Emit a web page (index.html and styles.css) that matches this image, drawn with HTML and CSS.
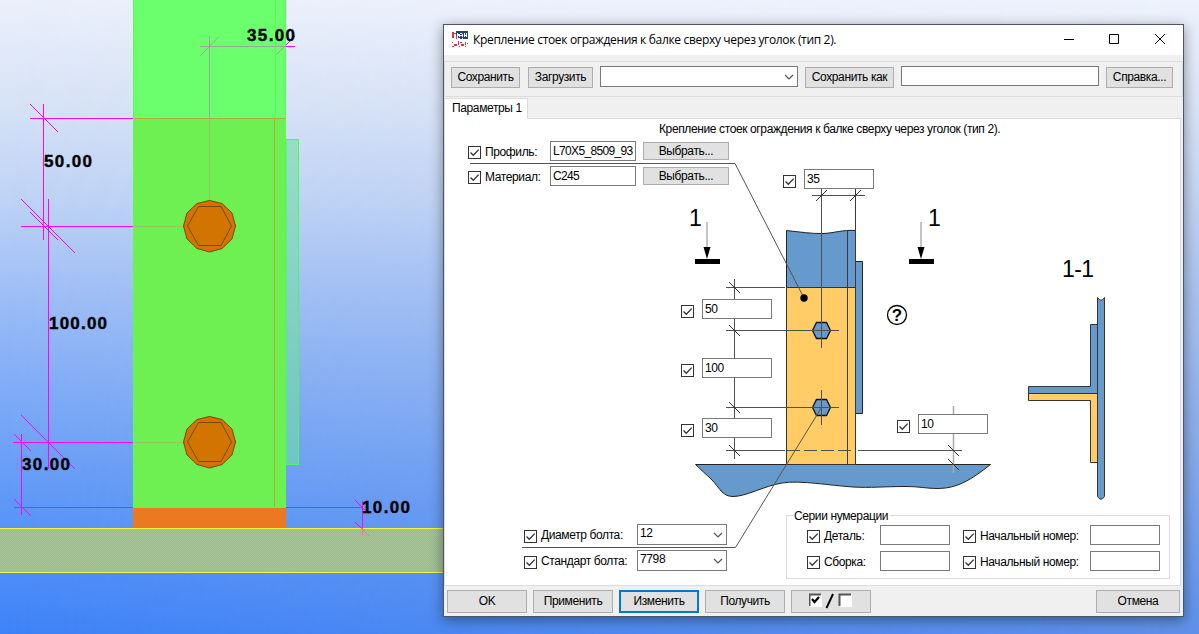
FILE: index.html
```html
<!DOCTYPE html>
<html lang="ru">
<head>
<meta charset="utf-8">
<title>Крепление стоек ограждения</title>
<link rel="stylesheet" href="styles.css">
</head>
<body>
<svg class="symbols" width="0" height="0">
  <symbol id="tick" viewBox="0 0 13 13"><path d="M2.5 6.5 5.3 9.3 10.7 3.6" fill="none" stroke="#333" stroke-width="1.3"/></symbol>
  <symbol id="chev" viewBox="0 0 10 6"><path d="M1 1 5 5 9 1" fill="none" stroke="#555" stroke-width="1.2"/></symbol>
</svg>
<main class="desktop">
  <svg class="model" viewBox="0 0 1199 634">
    <defs>
      <pattern id="dots" width="2" height="2" patternUnits="userSpaceOnUse"><path d="M0 0h1v1H0zM1 1h1v1H1z" fill="#c0d070" opacity=".4"/></pattern>
    </defs>
    <rect x="133" y="0" width="153" height="118" fill="#6bff6e"/>
    <rect x="133" y="118" width="153" height="390" fill="#6ef053"/>
    <path d="M133.5 0V507M285.500 0V507M275.500 0V118" stroke="#55fd58" fill="none"/>
    <rect x="133" y="508" width="153" height="20" fill="#eb7921"/>
    <path d="M274.500 508V528" stroke="#fb760c"/>
    <path d="M134 118.500H285M274.500 119V507" stroke="#b5aa38" fill="none"/>
    <rect x="286" y="139.500" width="12.500" height="325" fill="#6fe0a4" fill-opacity=".6" stroke="#4bf85c"/>
    <rect x="0" y="528" width="443" height="45" fill="#9abb9c"/>
    <rect x="0" y="528" width="443" height="45" fill="url(#dots)"/>
    <path d="M0 528.500H443M0 572.500H443" stroke="#f6f63c"/>
    <g stroke="#98aa90" fill="none">
      <path d="M200 46.500H286M209.500 36V118M200.500 55.500 219 36.500M276 55 286 45"/>
      <path d="M209.500 118V200M134 226.500H184M134 442.500H184" stroke="#98c460"/>
    </g>
    <g stroke="#fa04fa" fill="none">
      <path d="M286 46.500H295M286 45 295 36"/>
      <path d="M30 118.500H133M43.500 104V240M30 104 58 132M30 212 58 240"/>
      <path d="M21 226.500H133M48.500 199V469M21 199 75 253M21 415 75 469"/>
      <path d="M13 442.500H133M21.500 434V515M14 434 31 451"/>
      <path d="M14 507.500H133M14 499 31 516"/>
      <path d="M286 507.500H362"/>
      <path d="M362.500 501V528M355 500 369 514M355 522 361 528"/>
      <path d="M362.500 528V535M361 528 369 536" stroke="#f86c90"/>
    </g>
    <g fill="#d27400" stroke="#7b4504">
      <path id="bolt" d="M209.500 200.500 222 203.500 232 213 235.500 226 232 239 222 248.500 209.500 252 197 248.500 187 239 183.500 226 187 213 197 203.500ZM198.500 206.500H221L231.500 226 221 245.500H198.500L187.500 226Z"/>
      <use href="#bolt" y="216"/>
    </g>
    <g class="dim-text">
      <text x="247" y="41" textLength="48">35.00</text>
      <text x="44" y="167" textLength="48">50.00</text>
      <text x="49" y="329" textLength="58">100.00</text>
      <text x="22" y="470" textLength="48">30.00</text>
      <text x="362" y="513" textLength="48">10.00</text>
    </g>
  </svg>

  <section class="window">
    <header class="titlebar">
      <svg class="app-icon" viewBox="0 0 16 16" shape-rendering="crispEdges">
        <path d="M4 0h12v8H6V6H4z" fill="#1f4382"/>
        <path d="M0 1h2v1h2v1H2v4H0zM4 4h1v4H4zM0 11h1v1H0zM2 13h3v2H2zM6 10h1v4H6zM8 11h2v1H8zM9 13h3v2H9zM13 11h1v3h-1zM15 12h1v1h-1zM0 15h2v1H0zM7 15h1v1H7zM13 15h1v1h-1z" fill="#e0313f"/>
        <path d="M5 2h1v1h1v2H6v2H5zM8 2h2v1H8zM8 4h2v1H8zM7 3h1v3H7zM10 3h1v3h-1zM12 2h1v4h-1zM13 4h1v1h-1zM14 2h1v4h-1zM6 7h2v1H6zM10 7h1v1h-1z" fill="#fff"/>
      </svg>
      <h1>Крепление стоек ограждения к балке сверху через уголок (тип 2).</h1>
      <svg class="win-controls" viewBox="0 0 110 20" fill="none" stroke="#000">
        <path d="M2 9.500H12M47.500 4.500h9v9h-9zM93 4 103 14M103 4 93 14"/>
      </svg>
    </header>

    <div class="toolbar">
      <button class="btn save">Сохранить</button>
      <button class="btn load">Загрузить</button>
      <div class="combo preset"><svg><use href="#chev"/></svg></div>
      <button class="btn save-as">Сохранить как</button>
      <div class="input name"></div>
      <button class="btn help">Справка...</button>
    </div>

    <nav class="tabs"><span class="tab">Параметры 1</span></nav>

    <div class="panel">
      <svg class="drawing" viewBox="444 118 738 468">
        <g fill="#6699cc" stroke="#222">
          <path d="M786.500 230.500C800 232 812 233.800 823 233.500S843 229.500 855.500 230.500V287.500H786.500Z"/>
          <path d="M855.500 261.500H862.500V413.500H855.500Z"/>
          <path d="M695.500 464.500H990.500C971 480 957 488.500 938 488.500C926 488.500 920 486.500 905 486.500C885 486.500 870 488 853 487C830 485.500 800 480 782 483C764 486 746 496.500 733 496.500C722 496.500 720 488 711 479C706 474 701 470 695.500 464.500Z"/>
        </g>
        <path d="M786.500 287.500H855.500V464.500H786.500Z" fill="#ffcc66" stroke="#333"/>
        <path d="M847.500 230V464M855.500 189V464" stroke="#3a3a3a"/>
        <g fill="#6699cc" stroke="#111" stroke-width="1.300">
          <path d="M812.500 330.500 816.500 322.500H826.500L830.500 330.500 826.500 338.500H816.500Z"/>
          <path d="M812.500 407.500 816.500 399.500H826.500L830.500 407.500 826.500 415.500H816.500Z"/>
        </g>
        <g stroke="#505050" fill="none">
          <path d="M821.500 189V348M821.500 390V425M812 195.500H865"/>
          <path d="M734.500 279V459M726 287.500H785M726 330.500H839M726 407.500H839M726 450.500H785M858 450.500H962"/>
          <path d="M787 450.500H855" stroke-dasharray="13 4"/>
        </g>
        <path d="M953.500 406V473" stroke="#aaa" stroke-width="1.500"/>
        <path d="M816 201 827 190M850 201 861 190M729 282 740 293M729 325 740 336M729 402 740 413M729 445 740 456M948 445 959 456M948 459 959 470" stroke="#333"/>
        <path d="M470 163.500H735L804 298M522 547.500H735.500L821.500 407.500" fill="none" stroke="#555"/>
        <circle cx="804" cy="298" r="3.700"/>
        <path d="M707 222V248M921 222V248" stroke="#888"/>
        <path d="M703.500 247H710.500L707 259ZM695 259H720V264H695ZM917.500 247H924.500L921 259ZM909 259H934V264H909Z"/>
        <circle cx="897" cy="315" r="9.500" fill="#fff" stroke="#000" stroke-width="1.300"/>
        <g fill="#6699cc" stroke="#333">
          <path d="M1028.500 386.500H1090.500V324.500H1097.500V393.500H1028.500Z"/>
          <path d="M1028.500 393.500H1097.500V462.500H1090.500V400.500H1028.500Z" fill="#ffcc66"/>
          <path d="M1097.500 297.500Q1101 303 1104.500 297.500V496.500Q1101 502 1097.500 496.500Z"/>
        </g>
        <g class="marks">
          <text x="689" y="226">1</text>
          <text x="928" y="226">1</text>
          <text x="1062" y="277" textLength="32">1-1</text>
          <text class="q" x="897" y="321">?</text>
        </g>
      </svg>

      <p class="caption">Крепление стоек ограждения к балке сверху через уголок (тип 2).</p>

      <div class="rows profile">
        <div class="row"><span class="cb"><svg><use href="#tick"/></svg></span><label>Профиль:</label><div class="input">L70X5_8509_93</div><button class="btn">Выбрать...</button></div>
        <div class="row"><span class="cb"><svg><use href="#tick"/></svg></span><label>Материал:</label><div class="input">C245</div><button class="btn">Выбрать...</button></div>
      </div>

      <div class="pin edge-x"><span class="cb"><svg><use href="#tick"/></svg></span><div class="input">35</div></div>
      <div class="pin top-y"><span class="cb"><svg><use href="#tick"/></svg></span><div class="input">50</div></div>
      <div class="pin pitch"><span class="cb"><svg><use href="#tick"/></svg></span><div class="input">100</div></div>
      <div class="pin bottom-y"><span class="cb"><svg><use href="#tick"/></svg></span><div class="input">30</div></div>
      <div class="pin gap-y"><span class="cb"><svg><use href="#tick"/></svg></span><div class="input">10</div></div>

      <div class="lower">
        <div class="rows bolts">
          <div class="row"><span class="cb"><svg><use href="#tick"/></svg></span><label>Диаметр болта:</label><div class="combo">12<svg><use href="#chev"/></svg></div></div>
          <div class="row"><span class="cb"><svg><use href="#tick"/></svg></span><label>Стандарт болта:</label><div class="combo">7798<svg><use href="#chev"/></svg></div></div>
        </div>
        <div class="series">
          <span class="legend">Серии нумерации</span>
          <div class="row"><span class="cb"><svg><use href="#tick"/></svg></span><label class="part">Деталь:</label><div class="input"></div><span class="cb second"><svg><use href="#tick"/></svg></span><label class="num">Начальный номер:</label><div class="input"></div></div>
          <div class="row"><span class="cb"><svg><use href="#tick"/></svg></span><label class="part">Сборка:</label><div class="input"></div><span class="cb second"><svg><use href="#tick"/></svg></span><label class="num">Начальный номер:</label><div class="input"></div></div>
        </div>
      </div>
    </div>

    <footer class="actions">
      <button class="btn">OK</button>
      <button class="btn">Применить</button>
      <button class="btn primary">Изменить</button>
      <button class="btn">Получить</button>
      <button class="btn">
        <svg class="toggle" viewBox="0 0 44 16">
          <path d="M0 1H12V13H0Z" fill="#fff"/><path d="M.5 13V1.500H12" fill="none" stroke="#555" stroke-width="2"/><path d="M12.500 2V13.500H1" fill="none" stroke="#fff"/>
          <path d="M3 6 5.500 9 10 4" fill="none" stroke="#000" stroke-width="2.200"/>
          <path d="M17.500 15 24 1" stroke="#000" stroke-width="1.900"/>
          <path d="M30 1H42V13H30Z" fill="#fff"/><path d="M30.500 13V1.500H42" fill="none" stroke="#555" stroke-width="2"/><path d="M42.500 2V13.500H31" fill="none" stroke="#fff"/>
        </svg>
      </button>
      <button class="btn cancel">Отмена</button>
    </footer>
  </section>
</main>
</body>
</html>
```
FILE: styles.css
```css
* { box-sizing: border-box; }
body { margin: 0; font-family: "Liberation Sans", Arial, sans-serif; font-size: 12px; letter-spacing: -.38px; color: #000; overflow: hidden; }
.symbols { position: absolute; }

.desktop {
  position: relative;
  width: 1199px;
  height: 634px;
  overflow: hidden;
  background: linear-gradient(180deg, #ebf0fb 0, #d8e3f6 16%, #bdd2f5 32%, #9dbdf6 47%, #7daaf6 63%, #5f98f7 79%, #3f83f8 100%);
}
.desktop::before {
  content: "";
  position: absolute;
  inset: 0;
  background: linear-gradient(180deg, #edf2fc 0, #d5e0f5 19%, #a8c0ec 47%, #88aae8 71%, #5e90e8 100%);
  -webkit-mask-image: linear-gradient(90deg, transparent, #000);
  mask-image: linear-gradient(90deg, transparent, #000);
}
.model { position: absolute; inset: 0; width: 1199px; height: 634px; }
.dim-text { font: bold 17px "Liberation Sans", Arial, sans-serif; letter-spacing: 0; stroke: #000; stroke-width: .4px; }

.window {
  position: absolute;
  left: 443px;
  top: 24px;
  width: 741px;
  height: 593px;
  display: flex;
  flex-direction: column;
  background: #f0f0f0;
  border: 1px solid #4d5666;
  box-shadow: 0 3px 12px rgba(0, 0, 0, .42);
}

.titlebar { display: flex; height: 30px; background: #fff; padding-left: 8px; }
.app-icon { width: 16px; height: 16px; margin-top: 6px; }
.titlebar h1 { flex: 1; margin: 0 0 0 5px; font: 12px/30px "Open Sans", "Noto Sans", sans-serif; letter-spacing: -.33px; white-space: nowrap; }
.win-controls { width: 110px; height: 20px; margin: 5px 11px 0 0; }

.btn {
  display: flex;
  align-items: center;
  justify-content: center;
  padding: 0 0 1px;
  font: inherit;
  letter-spacing: inherit;
  color: #000;
  background: #e1e1e1;
  border: 1px solid #adadad;
  border-radius: 0;
  white-space: nowrap;
}
.input, .combo { background: #fff; border: 1px solid #7a7a7a; height: 20px; line-height: 18px; padding-left: 2px; white-space: nowrap; }
.combo { display: flex; justify-content: space-between; align-items: center; height: 21px; padding-right: 3px; }
.combo svg { width: 10px; height: 6px; margin-left: auto; }

.toolbar { display: flex; gap: 7px; height: 36px; margin: 6px 0 0; padding: 4px 0 0 6px; border: 1px solid #dcdcdc; }
.toolbar .btn { height: 21px; margin-top: 1px; }
.save { width: 69px; margin-right: 1px; }
.load { width: 65px; }
.preset, .name { width: 198px; }
.save-as { width: 89px; }
.help { width: 67px; }

.tabs { display: flex; height: 20px; margin-top: 1px; }
.tab { width: 84px; background: #fff; border: 1px solid #dcdcdc; border-bottom: 0; padding-left: 7px; line-height: 18px; position: relative; margin-bottom: -1px; z-index: 1; }

.panel { position: relative; display: flex; flex-direction: column; width: 737px; height: 468px; background: #fff; border: 1px solid #dcdcdc; }
.drawing { position: absolute; left: -1px; top: -1px; width: 738px; height: 468px; }
.marks { font: 23px "Liberation Sans", Arial, sans-serif; letter-spacing: 0; }
.q { font-size: 17px; font-weight: bold; text-anchor: middle; }
.caption { margin: 2px 0 0 214px; line-height: 16px; height: 20px; white-space: nowrap; position: relative; }

.rows { display: flex; flex-direction: column; position: relative; }
.row { display: flex; }
.row label { line-height: 22px; white-space: nowrap; margin-left: 4px; }
.cb { width: 13px; height: 13px; flex: none; border: 1px solid #333; background: #fff; margin-top: 5px; }
.cb svg { display: block; width: 13px; height: 13px; margin: -1px; }

.profile { gap: 3px; padding-left: 23px; }
.profile .row { height: 22px; }
.profile label { width: 65px; }
.profile .input { width: 86px; letter-spacing: -.65px; }
.profile .btn { width: 86px; height: 18px; margin: 1px 0 0 7px; }

.pin { position: absolute; display: flex; gap: 8px; }
.pin .cb { margin-top: 6px; }
.pin .input { width: 70px; letter-spacing: -.4px; }
.edge-x { left: 338px; top: 50px; }
.top-y { left: 236px; top: 180px; }
.pitch { left: 236px; top: 239px; }
.bottom-y { left: 236px; top: 299px; }
.gap-y { left: 452px; top: 295px; }

.lower { display: flex; margin-top: auto; position: relative; }
.bolts { gap: 5px; padding: 9px 0 0 79px; }
.bolts .row { height: 21px; }
.bolts .cb { margin-top: 6px; }
.bolts label { width: 96px; line-height: 23px; }
.bolts .combo { width: 90px; line-height: 17px; align-items: flex-start; }
.bolts .combo svg { margin-top: 7px; }
.series { position: relative; width: 384px; height: 64px; margin: 0 0 6px 59px; padding: 9px 0 0 20px; border: 1px solid #dcdcdc; }
.legend { position: absolute; left: 6px; top: -7px; padding: 0 2px 0 1px; background: #fff; line-height: 14px; }
.series .row { height: 26px; }
.series .input { width: 70px; }
.series .part { width: 56px; }
.series .second { margin-left: 13px; }
.series .num { width: 110px; }

.actions { display: flex; gap: 6px; margin-top: 4px; padding: 0 3px; }
.actions .btn { width: 80px; height: 23px; }
.actions .primary { border: 2px solid #0078d7; }
.actions .cancel { width: 84px; margin-left: auto; }
.toggle { width: 44px; height: 16px; }
```
